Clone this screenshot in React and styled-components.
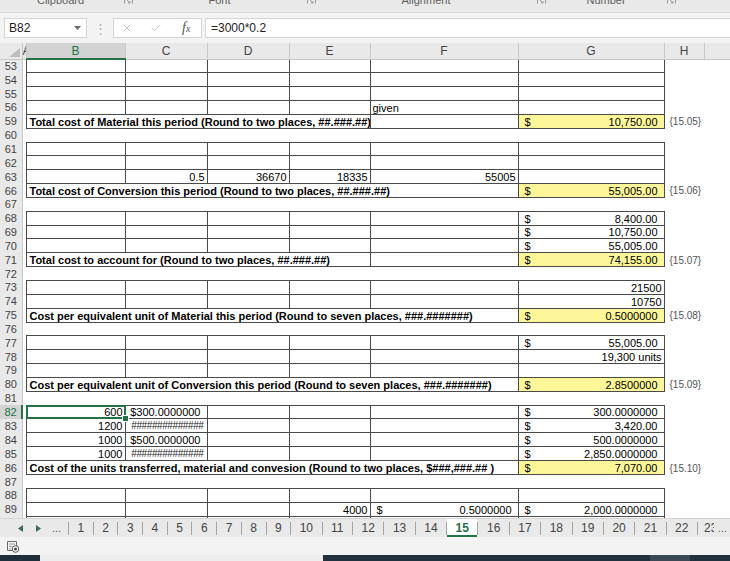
import React from "react";
import styled, { createGlobalStyle } from "styled-components";
import { X, Check } from "lucide-react";

const GREEN = "#217346";
const COLW = [22, 4, 99, 82, 82, 81, 148, 146, 40, 26];
const LETTERS = ["", "A", "B", "C", "D", "E", "F", "G", "H", ""];
const DATA_COLS = ["B", "C", "D", "E", "F", "G"];

const rows = [
  { n: 53, grid: {} },
  { n: 54, grid: {} },
  { n: 55, grid: {} },
  { n: 56, grid: { F: { t: "given", left: true } } },
  { n: 59, label: "Total cost of Material this period (Round to two places, ##.###.##)", span: 4, total: "10,750.00", note: "{15.05}" },
  { n: 60 },
  { n: 61, grid: {} },
  { n: 62, grid: {} },
  { n: 63, grid: { C: "0.5", D: "36670", E: "18335", F: "55005" } },
  { n: 66, label: "Total cost of Conversion this period (Round to two places, ##.###.##)", span: 5, total: "55,005.00", note: "{15.06}" },
  { n: 67 },
  { n: 68, grid: { G: { m: "8,400.00" } } },
  { n: 69, grid: { G: { m: "10,750.00" } } },
  { n: 70, grid: { G: { m: "55,005.00" } } },
  { n: 71, label: "Total cost to account for (Round to two places, ##.###.##)", span: 4, total: "74,155.00", note: "{15.07}" },
  { n: 72 },
  { n: 73, grid: { G: "21500" } },
  { n: 74, grid: { G: "10750" } },
  { n: 75, label: "Cost per equivalent unit of Material this period (Round to seven places, ###.#######)", span: 5, total: "0.5000000", note: "{15.08}" },
  { n: 76 },
  { n: 77, grid: { G: { m: "55,005.00" } } },
  { n: 78, grid: { G: "19,300 units" } },
  { n: 79, grid: {} },
  { n: 80, label: "Cost per equivalent unit of Conversion this period (Round to seven places, ###.#######)", span: 5, total: "2.8500000", note: "{15.09}" },
  { n: 81 },
  { n: 82, sel: true, grid: { B: "600", C: { t: "$300.0000000", pr: 6 }, G: { m: "300.0000000" } } },
  { n: 83, grid: { B: "1200", C: { hash: true }, G: { m: "3,420.00" } } },
  { n: 84, grid: { B: "1000", C: { t: "$500.0000000", pr: 6 }, G: { m: "500.0000000" } } },
  { n: 85, grid: { B: "1000", C: { hash: true }, G: { m: "2,850.0000000" } } },
  { n: 86, label: "Cost of the units transferred, material and convesion (Round to two places, $###,###.## )", span: 5, total: "7,070.00", note: "{15.10}" },
  { n: 87 },
  { n: 88, grid: {} },
  { n: 89, grid: { E: "4000", F: { m: "0.5000000" }, G: { m: "2,000.0000000" } } },
  { n: 90, grid: {} },
];

const tabs = ["1", "2", "3", "4", "5", "6", "7", "8", "9", "10", "11", "12", "13", "14", "15", "16", "17", "18", "19", "20", "21", "22"];

const ribbonGroups = [
  { name: "Clipboard", w: 135 },
  { name: "Font", w: 183 },
  { name: "Alignment", w: 230 },
  { name: "Number", w: 130 },
];

export default function App() {
  return (
    <>
      <GlobalStyle />
      <Window>
        <RibbonStrip>
          {ribbonGroups.map((g) => (
            <RibbonGroup key={g.name} $w={g.w}>
              <GroupLabel>{g.name}</GroupLabel>
              <Launcher>
                <svg width="9" height="6" viewBox="0 0 9 6">
                  <path d="M0.5 0 V3.5 M8.5 0 V3.5 M3 0 L6 3 M6 1 V3 H4" stroke="#9a9a9a" strokeWidth="1" fill="none" />
                </svg>
              </Launcher>
            </RibbonGroup>
          ))}
        </RibbonStrip>

        <FormulaRow>
          <NameBox>
            B82
            <svg width="7" height="4" viewBox="0 0 7 4">
              <path d="M0 0 H7 L3.5 4 Z" fill="#6b6b6b" />
            </svg>
          </NameBox>
          <Dots>⋮</Dots>
          <FxBox>
            <X size={12} strokeWidth={1.3} color="#a9a9a9" />
            <Check size={12} strokeWidth={1.3} color="#a9a9a9" />
            <Fx>
              f<small>x</small>
            </Fx>
          </FxBox>
          <FormulaInput>=3000*0.2</FormulaInput>
        </FormulaRow>

        <GridArea>
          <Sheet>
            <colgroup>
              {COLW.map((w, i) => (
                <Col key={i} $w={w} />
              ))}
            </colgroup>
            <thead>
              <tr>
                {LETTERS.map((l, i) => (
                  <HeadCell key={i} $sel={l === "B"} $clip={l === "A"}>
                    {i === 0 ? <Corner /> : l}
                  </HeadCell>
                ))}
              </tr>
            </thead>
            <tbody>{rows.map(renderRow)}</tbody>
          </Sheet>
        </GridArea>

        <TabBar>
          <NavArea>
            <svg width="5" height="7" viewBox="0 0 5 7">
              <path d="M5 0 V7 L0 3.5 Z" fill="#3f6b52" />
            </svg>
            <svg width="5" height="7" viewBox="0 0 5 7">
              <path d="M0 0 V7 L5 3.5 Z" fill="#3f6b52" />
            </svg>
            <More>...</More>
          </NavArea>
          {tabs.map((t) => (
            <React.Fragment key={t}>
              <TabSep />
              <Tab $active={t === "15"}>{t}</Tab>
            </React.Fragment>
          ))}
          <TabSep />
          <LastTab>
            2<ClipChar>3</ClipChar>
            <More>...</More>
          </LastTab>
        </TabBar>

        <StatusBar>
          <svg width="14" height="13" viewBox="0 0 14 13">
            <path d="M1.5 1.5 H10.5 V6 M1.5 1.5 V10.5 H6" stroke="#6d6d6d" fill="none" />
            <path d="M3 4 H9 M3 6.5 H6 M3 9 H5" stroke="#9a9a9a" />
            <circle cx="9.5" cy="9" r="3.3" fill="#fff" stroke="#555" />
            <circle cx="9.5" cy="9" r="1.5" fill="#444" />
          </svg>
        </StatusBar>

        <Taskbar>
          <TaskSeg $w={40} $c="#1f2e3b" />
          <TaskSeg $w={283} $c="#eeeeee" />
          <TaskSeg $w={327} $c="#22313e" />
          <TaskSeg $w={40} $c="#3c4955" />
          <TaskSeg $w={40} $c="#22313e" />
        </Taskbar>
      </Window>
    </>
  );
}

function renderCell(col, v, sel) {
  if (!v) return <Cell key={col} $b $sel={sel} />;
  if (typeof v === "string")
    return (
      <Cell key={col} $b $sel={sel}>
        {v}
      </Cell>
    );
  if (v.m)
    return (
      <Cell key={col} $b $pl={6} $pr={6}>
        <Dollar>$</Dollar>
        {v.m}
      </Cell>
    );
  if (v.hash)
    return (
      <Cell key={col} $b $pr={3}>
        <Hash>##############</Hash>
      </Cell>
    );
  return (
    <Cell key={col} $b $left={v.left} $pr={v.pr}>
      {v.t}
    </Cell>
  );
}

function renderRow(r) {
  let cells = [];
  if (r.label) {
    cells.push(
      <Cell key="lbl" colSpan={r.span} $b $bold $left $pl={3}>
        {r.label}
      </Cell>
    );
    if (r.span === 4) cells.push(<Cell key="F" $b />);
    cells.push(
      <Cell key="G" $b $fill $pl={6} $pr={6}>
        <Dollar>$</Dollar>
        {r.total}
      </Cell>
    );
    cells.push(<Note key="H">{r.note}</Note>);
    cells.push(<Cell key="I" />);
  } else if (r.grid) {
    cells = DATA_COLS.map((c) => renderCell(c, r.grid[c], r.sel && c === "B"));
    cells.push(<Cell key="H" />, <Cell key="I" />);
  } else {
    cells = ["B", "C", "D", "E", "F", "G", "H", "I"].map((c) => <Cell key={c} />);
  }
  return (
    <Row key={r.n}>
      <RowHead $sel={r.sel}>{r.n}</RowHead>
      <Cell />
      {cells}
    </Row>
  );
}

const GlobalStyle = createGlobalStyle`
  html, body {
    margin: 0;
    padding: 0;
    background: #fff;
  }
  body {
    font-family: "Liberation Sans", Arial, sans-serif;
  }
`;

const Window = styled.div`
  width: 730px;
  height: 561px;
  display: flex;
  flex-direction: column;
  overflow: hidden;
`;

const RibbonStrip = styled.div`
  height: 13px;
  flex: none;
  display: flex;
  background: #e9e9e9;
  border-bottom: 1px solid #d9d9d9;
  box-sizing: border-box;
  overflow: hidden;
`;

const RibbonGroup = styled.div`
  width: ${(p) => p.$w}px;
  display: flex;
  align-items: flex-start;
`;

const GroupLabel = styled.div`
  flex: 1;
  text-align: center;
  font-size: 11px;
  line-height: 12px;
  margin-top: -6px;
  color: #5e5e5e;
`;

const Launcher = styled.div`
  width: 14px;
  display: flex;
  justify-content: center;
`;

const FormulaRow = styled.div`
  height: 30px;
  flex: none;
  display: flex;
  align-items: center;
  padding-left: 4px;
  background: #f3f3f3;
`;

const NameBox = styled.div`
  width: 83px;
  height: 20px;
  box-sizing: border-box;
  border: 1px solid #d6d6d6;
  background: #fff;
  display: flex;
  align-items: center;
  justify-content: space-between;
  padding: 0 5px 0 4px;
  font-size: 12px;
  color: #222;
`;

const Dots = styled.div`
  width: 26px;
  text-align: center;
  color: #b3b3b3;
  font-size: 13px;
`;

const FxBox = styled.div`
  width: 89px;
  height: 20px;
  box-sizing: border-box;
  border: 1px solid #d6d6d6;
  background: #fff;
  display: flex;
  align-items: center;
  gap: 17px;
  padding-left: 7px;
`;

const Fx = styled.span`
  font-family: "Liberation Serif", "Times New Roman", serif;
  font-style: italic;
  font-size: 14px;
  color: #555;
  margin-left: 3px;

  small {
    font-size: 10px;
  }
`;

const FormulaInput = styled.div`
  flex: 1;
  height: 20px;
  margin-left: 3px;
  box-sizing: border-box;
  border: 1px solid #d6d6d6;
  border-right: none;
  background: #fff;
  display: flex;
  align-items: center;
  padding-left: 5px;
  font-size: 12px;
  color: #222;
`;

const GridArea = styled.div`
  height: 475px;
  flex: none;
  overflow: hidden;
  background: #fff;
`;

const Sheet = styled.table`
  width: 730px;
  table-layout: fixed;
  border-collapse: collapse;
  font-family: "Liberation Sans", Arial, sans-serif;
  font-size: 11px;
`;

const Col = styled.col`
  width: ${(p) => p.$w}px;
`;

const HeadCell = styled.th`
  height: 15px;
  padding: 0;
  position: relative;
  background: ${(p) => (p.$sel ? "#d3d3d3" : "#e9e9e9")};
  color: ${(p) => (p.$sel ? GREEN : "#444")};
  font-weight: 400;
  font-size: 12px;
  text-align: ${(p) => (p.$clip ? "left" : "center")};
  white-space: nowrap;
  overflow: hidden;
  border-right: 1px solid #c8c8c8;
  border-bottom: ${(p) => (p.$sel ? `2px solid ${GREEN}` : "1px solid #c8c8c8")};
`;

const Corner = styled.span`
  position: absolute;
  right: 2px;
  bottom: 2px;
  width: 0;
  height: 0;
  border-left: 11px solid transparent;
  border-bottom: 9px solid #bdbdbd;
`;

const Row = styled.tr`
  height: 13.85px;
`;

const RowHead = styled.td`
  padding: 0;
  text-align: center;
  font-size: 11px;
  line-height: 12px;
  background: ${(p) => (p.$sel ? "#d3d3d3" : "#e9e9e9")};
  color: ${(p) => (p.$sel ? GREEN : "#444")};
  border-right: ${(p) => (p.$sel ? `2px solid ${GREEN}` : "1px solid #c8c8c8")};
`;

const Cell = styled.td`
  padding: 0 ${(p) => p.$pr ?? 2}px 0 ${(p) => p.$pl ?? 2}px;
  border: ${(p) => (p.$b ? "1px solid #4a4a4a" : "none")};
  background: ${(p) => (p.$fill ? "#fdf79a" : "transparent")};
  text-align: ${(p) => (p.$left ? "left" : "right")};
  font-weight: ${(p) => (p.$bold ? 700 : 400)};
  white-space: nowrap;
  overflow: ${(p) => (p.$sel ? "visible" : "hidden")};
  vertical-align: bottom;
  line-height: 12px;
  color: #000;
  position: ${(p) => (p.$sel ? "relative" : "static")};

  ${(p) =>
    p.$sel &&
    `
    &::after {
      content: "";
      position: absolute;
      left: -1px;
      top: -1px;
      right: -1px;
      bottom: -1px;
      border: 2px solid ${GREEN};
    }
    &::before {
      content: "";
      position: absolute;
      right: -4px;
      bottom: -4px;
      width: 5px;
      height: 5px;
      background: ${GREEN};
      border: 1px solid #fff;
      z-index: 2;
    }
  `}
`;

const Dollar = styled.span`
  float: left;
`;

const Hash = styled.span`
  font-size: 10px;
  letter-spacing: -0.4px;
  color: #222;
`;

const Note = styled.td`
  padding: 0 0 0 5px;
  font-size: 10px;
  line-height: 12px;
  color: #555;
  white-space: nowrap;
  overflow: visible;
  vertical-align: bottom;
`;

const TabBar = styled.div`
  height: 19px;
  flex: none;
  display: flex;
  align-items: stretch;
  background: #e9e9e9;
  border-top: 1px solid #d4d4d4;
  box-sizing: border-box;
  font-size: 12px;
  color: #444;
  overflow: hidden;
  white-space: nowrap;
`;

const NavArea = styled.div`
  width: 68px;
  flex: none;
  display: flex;
  align-items: center;
  gap: 13px;
  padding-left: 18px;
  box-sizing: border-box;
`;

const More = styled.span`
  color: #3f6b52;
  font-size: 11px;
  margin-left: -2px;
`;

const TabSep = styled.span`
  width: 1px;
  height: 13px;
  align-self: center;
  background: #a3a3a3;
  flex: none;
`;

const Tab = styled.div`
  flex: none;
  display: flex;
  align-items: center;
  padding: 0 8.5px;
  background: ${(p) => (p.$active ? "#fff" : "transparent")};
  color: ${(p) => (p.$active ? GREEN : "#444")};
  font-weight: ${(p) => (p.$active ? 700 : 400)};
  box-shadow: ${(p) => (p.$active ? `inset 0 -2px 0 ${GREEN}` : "none")};
`;

const LastTab = styled.div`
  flex: none;
  display: flex;
  align-items: center;
  gap: 6px;
  padding-left: 6px;
`;

const ClipChar = styled.span`
  display: inline-block;
  width: 3px;
  overflow: hidden;
  margin-left: -6px;
`;

const StatusBar = styled.div`
  height: 18px;
  flex: none;
  display: flex;
  align-items: center;
  padding-left: 6px;
  background: #f3f3f3;
`;

const Taskbar = styled.div`
  height: 6px;
  flex: none;
  display: flex;
`;

const TaskSeg = styled.div`
  width: ${(p) => p.$w}px;
  background: ${(p) => p.$c};
`;
